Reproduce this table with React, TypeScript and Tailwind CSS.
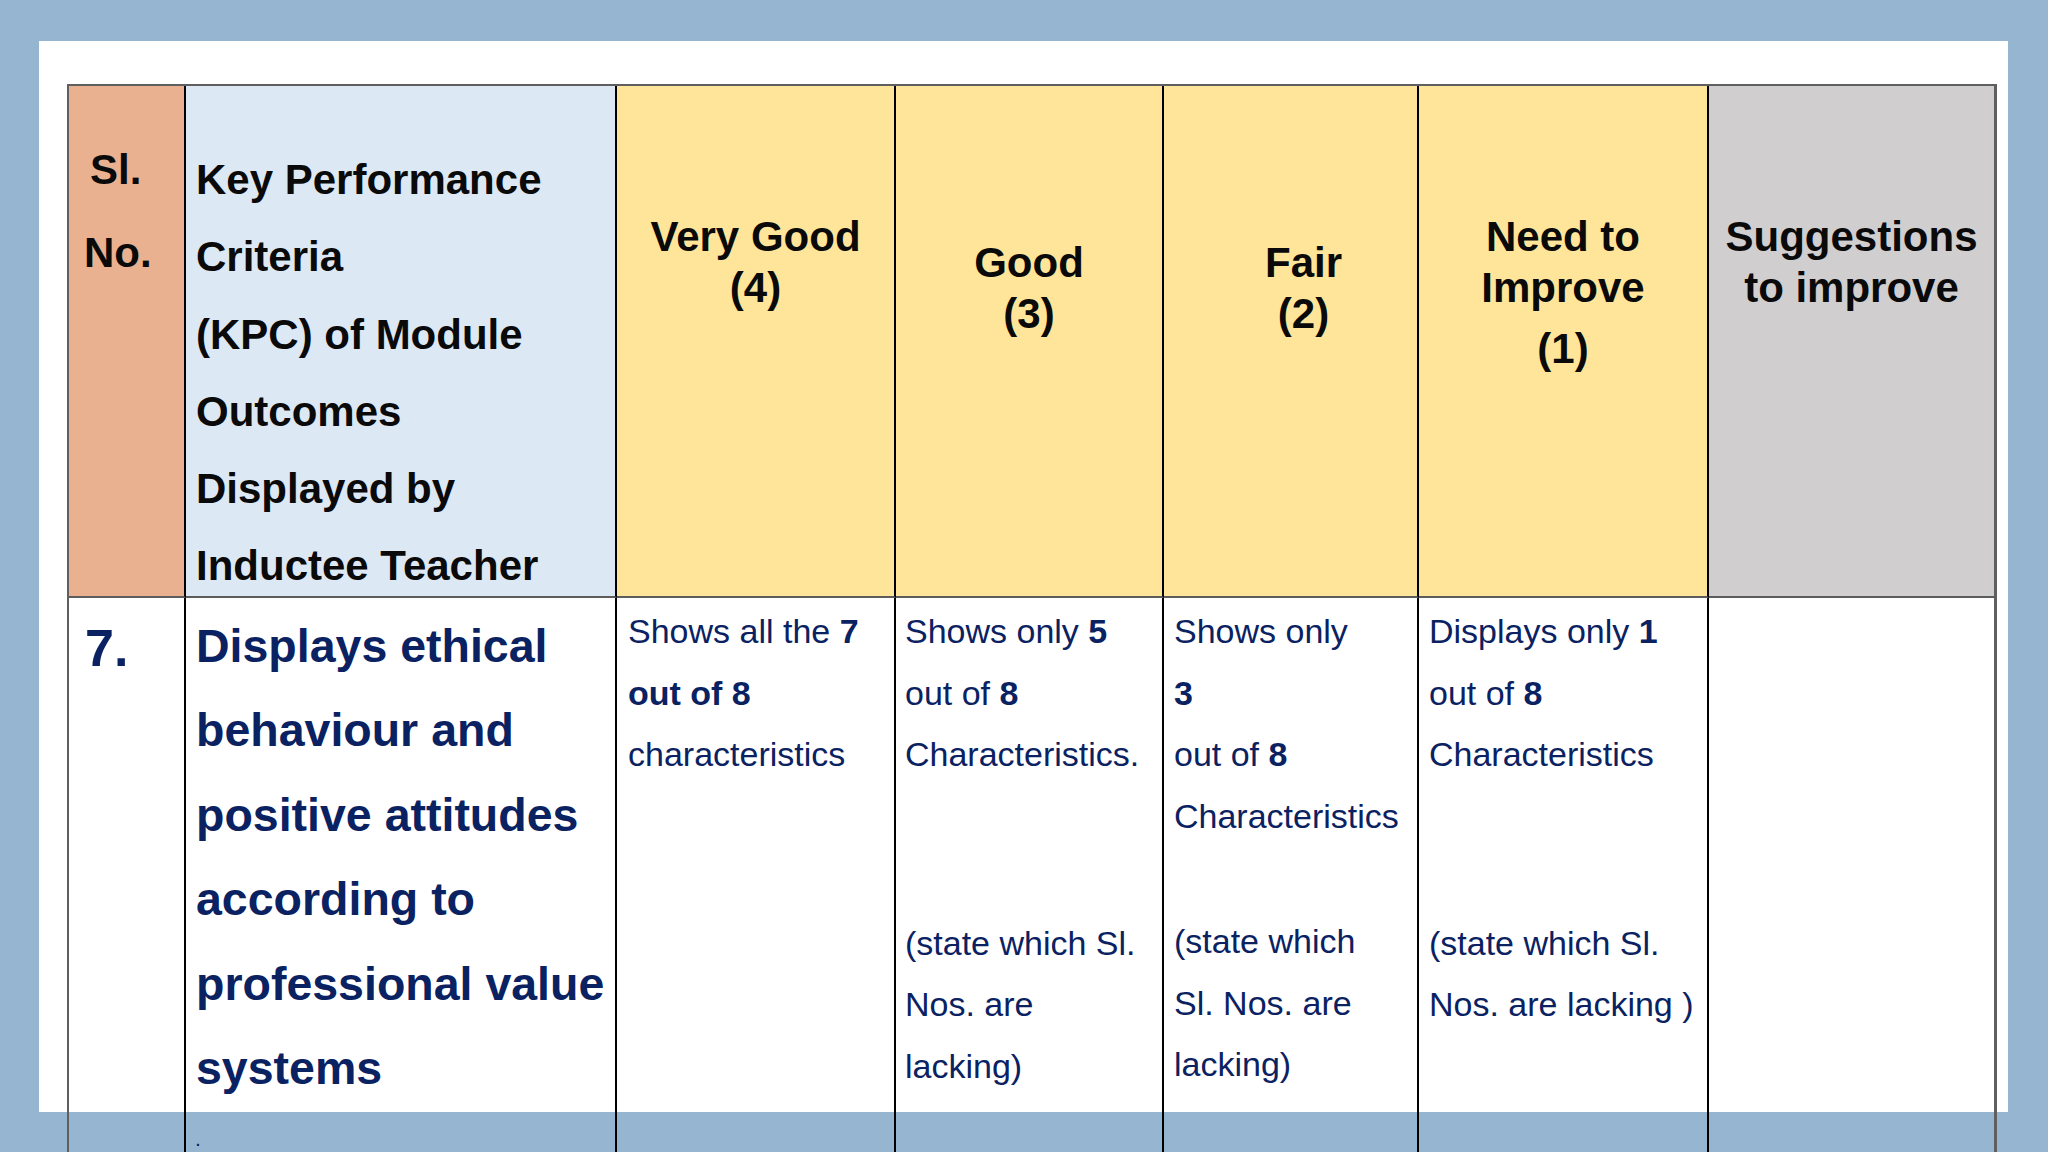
import React from "react";

const HeadCell: React.FC<{ bg: string; last?: boolean; className?: string; children: React.ReactNode }> = ({
  bg,
  last,
  className,
  children,
}) => (
  <div
    className={`h-[512px] border-b-2 border-b-[#5c5c5c] ${last ? "" : "border-r-2 border-r-black"} ${bg} ${className ?? ""}`}
  >
    {children}
  </div>
);

const BodyCell: React.FC<{ last?: boolean; className?: string; children?: React.ReactNode }> = ({
  last,
  className,
  children,
}) => (
  <div className={`h-[620px] ${last ? "" : "border-r-2 border-r-black"} ${className ?? ""}`}>{children}</div>
);

const Spacer: React.FC<{ h: string }> = ({ h }) => <div className={h} />;

export default function App() {
  return (
    <div className="h-[1152px] w-[2048px] overflow-hidden bg-[#95b5d0] pl-[39px] pt-[41px] font-['Liberation_Sans',Arial,sans-serif]">
      <div className="h-[1071px] w-[1969px] bg-white pl-[28px] pt-[43px]">
        <div className="grid w-[1930px] grid-cols-[117px_431px_279px_268px_255px_290px_285px] border-l-2 border-r-[3px] border-t-2 border-[#5f5f5f]">
          {/* header row */}
          <HeadCell bg="bg-[#eab190]" className="pt-[42px] text-[42px] font-bold leading-[83px] text-[#0a0a0a]">
            <div className="pl-[21px]">Sl.</div>
            <div className="pl-[15px]">No.</div>
          </HeadCell>
          <HeadCell bg="bg-[#dde8f5]" className="pl-[10px] pt-[55px] text-[42px] font-bold leading-[77.3px] text-[#0a0a0a]">
            <div className="whitespace-nowrap">Key Performance</div>
            <div className="whitespace-nowrap">Criteria</div>
            <div className="whitespace-nowrap">(KPC) of Module</div>
            <div className="whitespace-nowrap">Outcomes</div>
            <div className="whitespace-nowrap">Displayed by</div>
            <div className="whitespace-nowrap">Inductee Teacher</div>
          </HeadCell>
          <HeadCell bg="bg-[#fee599]" className="pt-[126px] text-center text-[42px] font-bold leading-[50.5px] text-[#0a0a0a]">
            <div>Very Good</div>
            <div>(4)</div>
          </HeadCell>
          <HeadCell bg="bg-[#fee599]" className="pt-[152px] text-center text-[42px] font-bold leading-[50.5px] text-[#0a0a0a]">
            <div>Good</div>
            <div>(3)</div>
          </HeadCell>
          <HeadCell bg="bg-[#fee599]" className="pl-[26px] pt-[152px] text-center text-[42px] font-bold leading-[50.5px] text-[#0a0a0a]">
            <div>Fair</div>
            <div>(2)</div>
          </HeadCell>
          <HeadCell bg="bg-[#fee599]" className="pt-[126px] text-center text-[42px] font-bold leading-[50.5px] text-[#0a0a0a]">
            <div>Need to</div>
            <div>Improve</div>
            <div className="mt-[11px]">(1)</div>
          </HeadCell>
          <HeadCell bg="bg-[#d0cecf]" last className="pt-[126px] text-center text-[42px] font-bold leading-[50.5px] text-[#0a0a0a]">
            <div>Suggestions</div>
            <div>to improve</div>
          </HeadCell>

          {/* row 7 */}
          <BodyCell className="pl-[16px] pt-[8px] text-[52px] font-bold leading-[85px] text-[#0b2262]">7.</BodyCell>
          <BodyCell className="pl-[10px] pt-[6px] text-[46.5px] font-bold leading-[84.4px] text-[#0b2262]">
            <div className="whitespace-nowrap">Displays ethical</div>
            <div className="whitespace-nowrap">behaviour and</div>
            <div className="whitespace-nowrap">positive attitudes</div>
            <div className="whitespace-nowrap">according to</div>
            <div className="whitespace-nowrap">professional value</div>
            <div className="whitespace-nowrap">systems</div>
            <div className="mt-[24px] text-[14px] leading-[14px]">.</div>
          </BodyCell>
          <BodyCell className="pl-[11px] pt-[3px] text-[34px] leading-[61.5px] text-[#0b2262]">
            <div className="whitespace-nowrap">
              Shows all the <b>7</b>
            </div>
            <div className="whitespace-nowrap font-bold">out of 8</div>
            <div className="whitespace-nowrap">characteristics</div>
          </BodyCell>
          <BodyCell className="pl-[9px] pt-[3px] text-[34px] leading-[61.5px] text-[#0b2262]">
            <div className="whitespace-nowrap">
              Shows only <b>5</b>
            </div>
            <div className="whitespace-nowrap">
              out of <b>8</b>
            </div>
            <div className="whitespace-nowrap">Characteristics.</div>
            <Spacer h="h-[127px]" />
            <div className="whitespace-nowrap">(state which Sl.</div>
            <div className="whitespace-nowrap">Nos. are</div>
            <div className="whitespace-nowrap">lacking)</div>
          </BodyCell>
          <BodyCell className="pl-[10px] pt-[3px] text-[34px] leading-[61.5px] text-[#0b2262]">
            <div className="whitespace-nowrap">Shows only</div>
            <div className="whitespace-nowrap font-bold">3</div>
            <div className="whitespace-nowrap">
              out of <b>8</b>
            </div>
            <div className="whitespace-nowrap">Characteristics</div>
            <Spacer h="h-[64px]" />
            <div className="whitespace-nowrap">(state which</div>
            <div className="whitespace-nowrap">Sl. Nos. are</div>
            <div className="whitespace-nowrap">lacking)</div>
          </BodyCell>
          <BodyCell className="pl-[10px] pt-[3px] text-[34px] leading-[61.5px] text-[#0b2262]">
            <div className="whitespace-nowrap">
              Displays only <b>1</b>
            </div>
            <div className="whitespace-nowrap">
              out of <b>8</b>
            </div>
            <div className="whitespace-nowrap">Characteristics</div>
            <Spacer h="h-[127px]" />
            <div className="whitespace-nowrap">(state which Sl.</div>
            <div className="whitespace-nowrap">Nos. are lacking )</div>
          </BodyCell>
          <BodyCell last />
        </div>
      </div>
    </div>
  );
}
